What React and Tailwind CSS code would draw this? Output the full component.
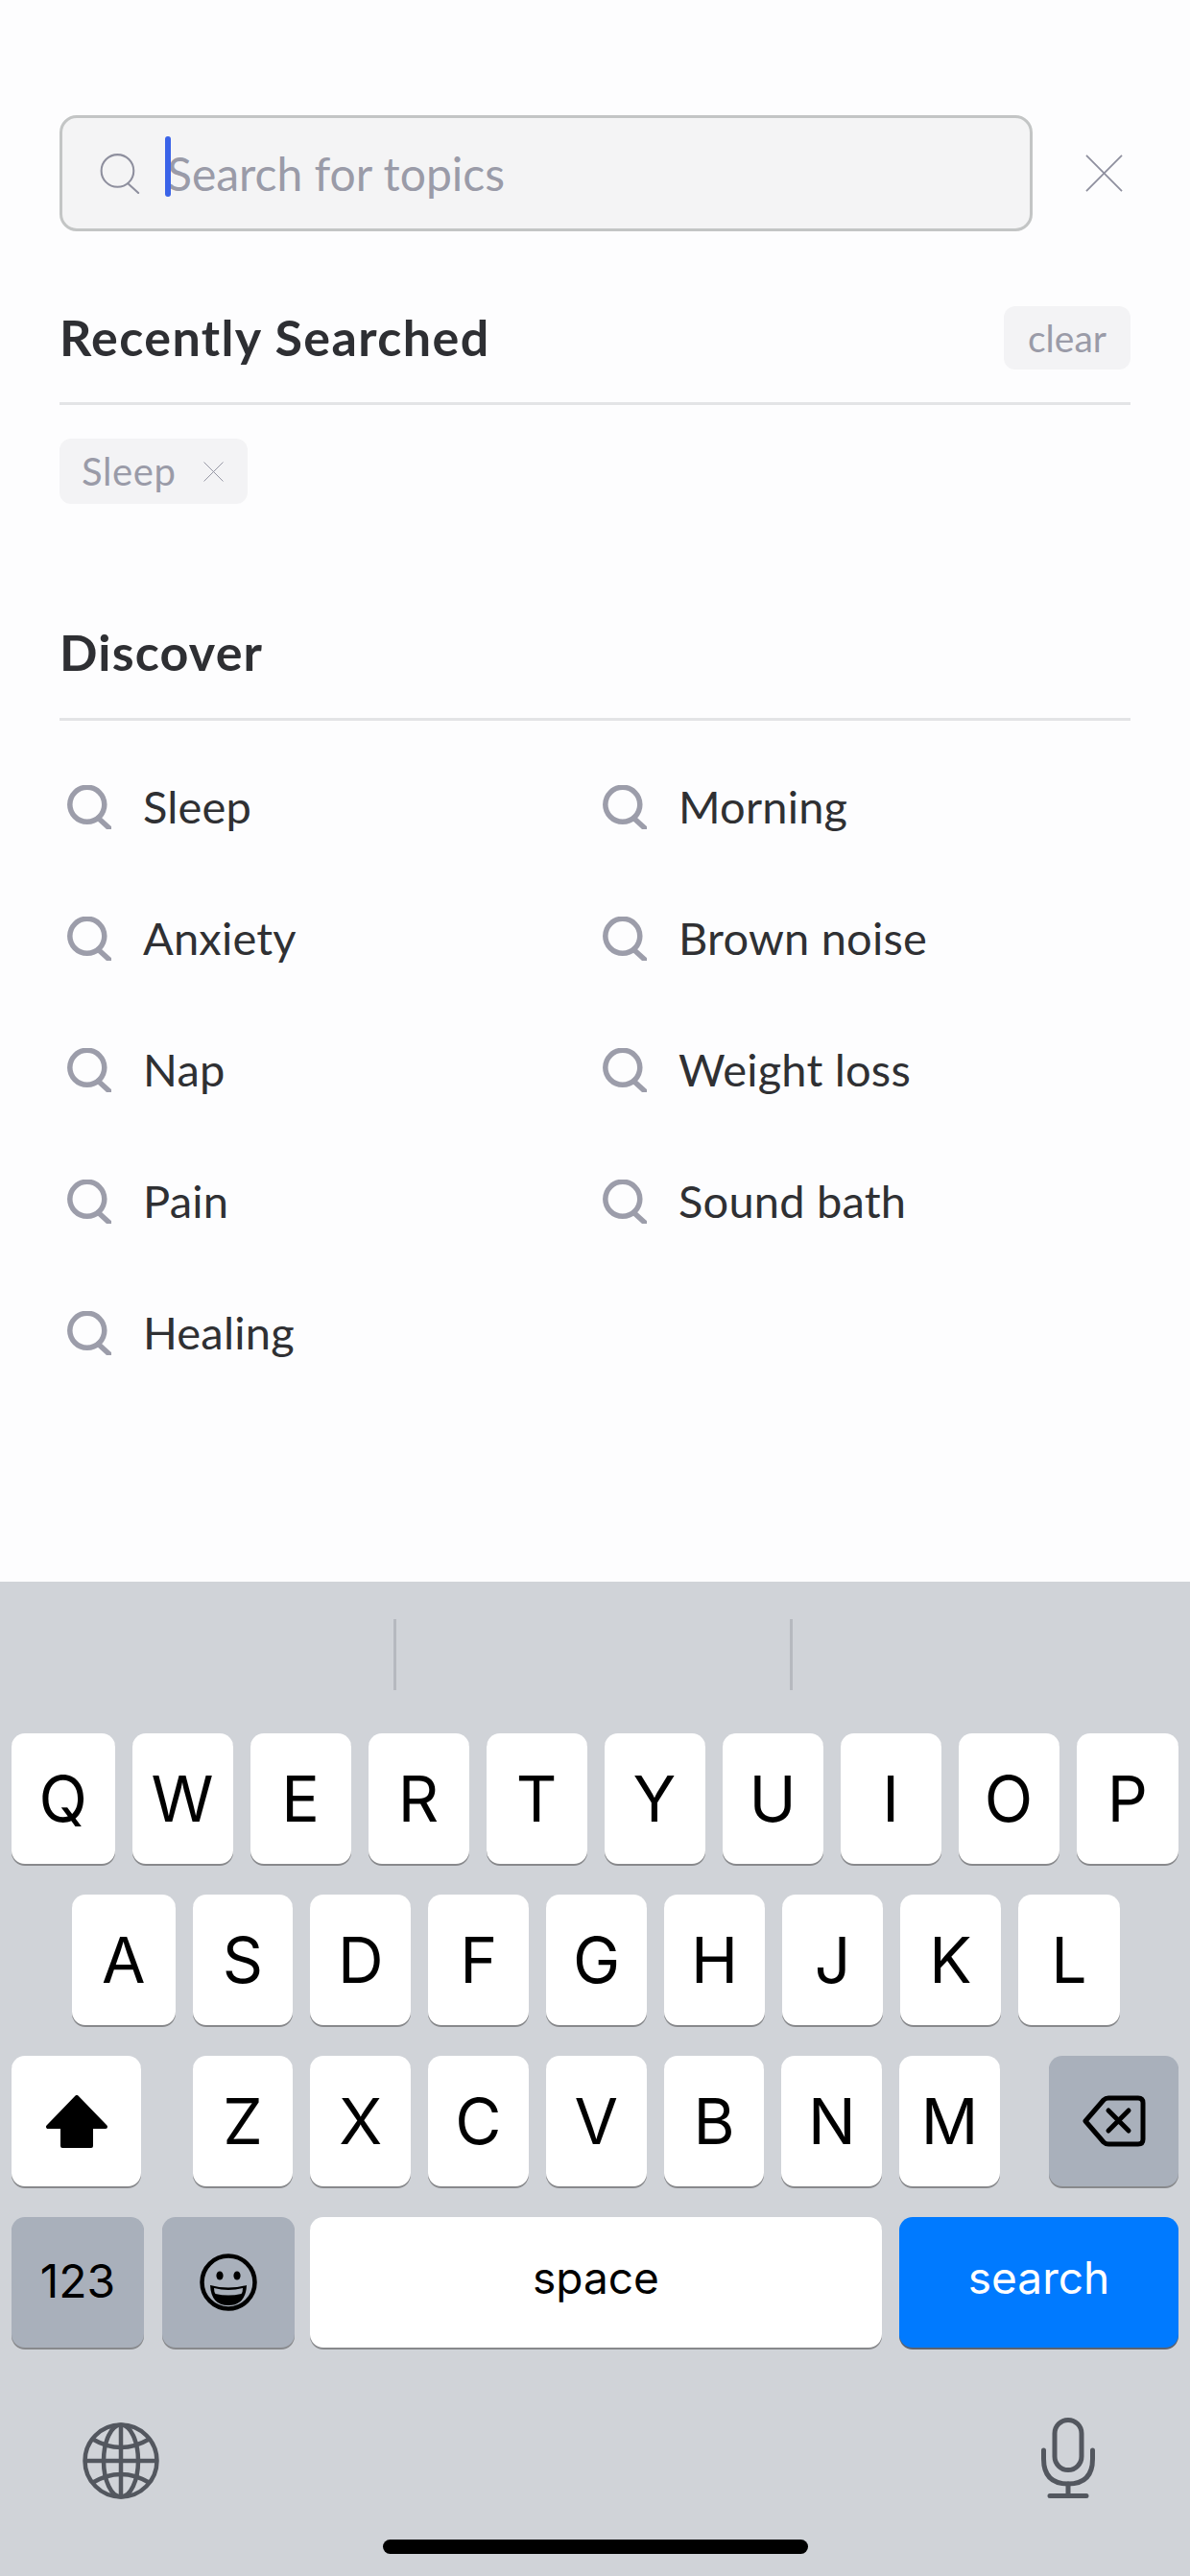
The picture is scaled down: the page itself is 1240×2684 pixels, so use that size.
import React from 'react';

const row1 = ['W', 'E', 'R', 'T', 'Y', 'U', 'I', 'O'];
const row2 = ['S', 'D', 'F', 'G', 'H', 'J', 'K'];
const row3 = ['Z', 'X', 'C', 'V', 'B', 'N', 'M'];
const topics = ['Sleep', 'Morning', 'Anxiety', 'Brown noise', 'Nap', 'Weight loss', 'Pain', 'Sound bath', 'Healing'];

function SearchIcon({ className, strokeWidth = 5.5 }) {
  return (
    <svg viewBox="0 0 46 46" fill="none" stroke="currentColor" strokeWidth={strokeWidth} strokeLinecap="round" className={className}>
      <circle cx="20.8" cy="20.3" r="18" />
      <path d="M32.5 34.5 L44 45" />
    </svg>
  );
}

function CloseIcon({ className }) {
  return (
    <svg viewBox="0 0 40 40" fill="none" stroke="currentColor" strokeWidth="1.8" className={className}>
      <path d="M1 1 L39 39 M39 1 L1 39" />
    </svg>
  );
}

function Key({ label, className = 'flex-1' }) {
  return (
    <div className={`${className} h-[136px] rounded-[14px] bg-white shadow-[0_2px_0_#88898c] flex items-center justify-center text-[66px] text-black`}>
      {label}
    </div>
  );
}

function ShiftIcon() {
  return (
    <svg viewBox="0 0 64 55" className="w-[64px] h-[55px]" fill="#000" stroke="#000" strokeWidth="4" strokeLinejoin="round">
      <path d="M32 2 L2 33 H17 V53 H47 V33 H62 Z" />
    </svg>
  );
}

function DeleteIcon() {
  return (
    <svg viewBox="0 0 66 54" className="w-[66px] h-[54px]" fill="none" stroke="#000" strokeWidth="5" strokeLinejoin="round" strokeLinecap="round">
      <path d="M3 27 L22 5 Q24 3 27 3 H58 Q63 3 63 8 V46 Q63 51 58 51 H27 Q24 51 22 49 Z" />
      <path d="M27 16 L48 37 M48 16 L27 37" />
    </svg>
  );
}

function EmojiIcon() {
  return (
    <svg viewBox="0 0 60 60" className="w-[60px] h-[60px]">
      <circle cx="30" cy="30" r="27.5" fill="none" stroke="#000" strokeWidth="4.5" />
      <ellipse cx="21" cy="23" rx="3.6" ry="4.6" fill="#000" />
      <ellipse cx="39" cy="23" rx="3.6" ry="4.6" fill="#000" />
      <path d="M11 33 Q30 38 49 33 Q48 54 30 54 Q12 54 11 33 Z" fill="#000" />
      <path d="M15 36 Q30 40 45 36 Q45 40 43.5 42 Q30 45 16.5 42 Q15 40 15 36 Z" fill="#a9b0bb" />
    </svg>
  );
}

function GlobeIcon() {
  return (
    <svg viewBox="0 0 80 80" className="w-[80px] h-[80px] mt-[5px]" fill="none" stroke="#53575f" strokeWidth="4.5">
      <circle cx="40" cy="40" r="37.5" />
      <ellipse cx="40" cy="40" rx="18" ry="37.5" />
      <path d="M40 2.5 V77.5 M2.5 40 H77.5" />
      <path d="M10 17 Q40 35 70 17 M10 63 Q40 45 70 63" />
    </svg>
  );
}

function MicIcon() {
  return (
    <svg viewBox="0 0 56 84" className="w-[56px] h-[84px]" fill="none" stroke="#53575f" strokeWidth="5" strokeLinecap="round">
      <rect x="14" y="2.5" width="28" height="52" rx="14" />
      <path d="M2.5 34 V43 Q2.5 69 28 69 Q53.5 69 53.5 43 V34" />
      <path d="M28 69 V81 M9 81.5 H47" />
    </svg>
  );
}

export default function App() {
  return (
    <div className="w-[1240px] h-[2684px] flex flex-col bg-[#fdfdfe] font-['Lato',sans-serif] overflow-hidden">
      <div className="h-[1648px] shrink-0 pt-[120px] pl-[62px] pr-[62px]">
        {/* search field */}
        <div className="flex items-center">
          <div className="w-[1014px] h-[121px] rounded-[18px] border-[3px] border-[#c3c5c5] bg-[#f4f4f5] flex items-center pl-[38px]">
            <SearchIcon className="w-[43px] h-[43px] text-[#8e8f9e]" strokeWidth={2.2} />
            <div className="relative ml-[28px] text-[48px] text-[#9a9ba8] leading-none">
              <span className="absolute left-[-2px] top-[-15px] w-[6px] h-[63px] rounded-full bg-[#3a63e8]" />
              Search for topics
            </div>
          </div>
          <CloseIcon className="ml-[55px] w-[39px] h-[39px] text-[#8e8f9e]" />
        </div>

        {/* recent */}
        <div className="mt-[78px] pb-[34px] border-b-[3px] border-[#e3e4e6] flex items-center justify-between">
          <div className="pb-[3px] text-[52px] font-bold tracking-[1.4px] text-[#2e2f33] leading-none">Recently Searched</div>
          <div className="w-[132px] h-[66px] rounded-[12px] bg-[#f3f3f5] flex items-center justify-center text-[39px] text-[#9a9ba8]">clear</div>
        </div>
        <div className="mt-[35px] w-[196px] h-[68px] rounded-[12px] bg-[#f3f3f5] flex items-center pl-[23px] text-[40px] tracking-[0.6px] text-[#9a9ba8]">
          Sleep
          <CloseIcon className="ml-[29px] w-[21px] h-[21px] text-[#8e8f9e]" />
        </div>

        {/* discover */}
        <div className="mt-[122px] h-[66px] box-content pb-[35px] border-b-[3px] border-[#e3e4e6] flex items-center">
          <div className="pb-[3px] text-[52px] font-bold tracking-[1.2px] text-[#2e2f33] leading-none">Discover</div>
        </div>
        <div className="mt-[21px] grid grid-cols-[558px_1fr]">
          {topics.map((topic) => (
            <div key={topic} className="h-[137px] flex items-center pl-[8px] text-[47px] tracking-[0.2px] text-[#2f3033]">
              <SearchIcon className="w-[46px] h-[46px] text-[#9c9daa]" />
              <span className="ml-[33px]">{topic}</span>
            </div>
          ))}
        </div>
      </div>

      {/* keyboard */}
      <div className="flex-1 bg-[#d0d3d8] font-['Inter',sans-serif]">
        <div className="h-[158px] flex pt-[39px]">
          <div className="w-[413px] h-[74px] border-r-[3px] border-[#b6b9bf]" />
          <div className="w-[413px] h-[74px] border-r-[3px] border-[#b6b9bf]" />
        </div>
        <div className="flex gap-[18px] px-[12px]">
          <Key className="w-[107.5px]" label="Q" />
          {row1.map((k) => <Key key={k} label={k} />)}
          <Key className="w-[106.5px]" label="P" />
        </div>
        <div className="mt-[32px] flex gap-[18px] pl-[75px] pr-[73px]">
          <Key className="w-[107.5px]" label="A" />
          {row2.map((k) => <Key key={k} label={k} />)}
          <Key className="w-[106px]" label="L" />
        </div>
        <div className="mt-[32px] flex px-[12px]">
          <Key className="w-[135px]" label={<ShiftIcon />} />
          <div className="ml-[53.5px] w-[841.5px] flex gap-[18px]">
            {row3.map((k) => <Key key={k} label={k} />)}
          </div>
          <Key className="ml-auto w-[135px] !bg-[#a9b0bb]" label={<DeleteIcon />} />
        </div>
        <div className="mt-[32px] flex px-[12px]">
          <div className="w-[138px] h-[136px] pb-[2px] rounded-[14px] bg-[#a9b0bb] shadow-[0_2px_0_#88898c] flex items-center justify-center text-[48px] text-black">123</div>
          <div className="ml-[19px] w-[138px] h-[136px] rounded-[14px] bg-[#a9b0bb] shadow-[0_2px_0_#88898c] flex items-center justify-center">
            <EmojiIcon />
          </div>
          <div className="ml-[16px] w-[596px] h-[136px] pb-[10px] rounded-[14px] bg-white shadow-[0_2px_0_#88898c] flex items-center justify-center text-[46px] text-black">space</div>
          <div className="ml-[18px] flex-1 h-[136px] pb-[10px] rounded-[14px] bg-[#007aff] shadow-[0_2px_0_#5c6370] flex items-center justify-center text-[46px] text-white">search</div>
        </div>
        <div className="mt-[73px] flex items-center justify-between pl-[86px] pr-[99px] h-[84px]">
          <GlobeIcon />
          <MicIcon />
        </div>
        <div className="mt-[43px] mx-auto w-[443px] h-[15px] rounded-full bg-black" />
      </div>
    </div>
  );
}
